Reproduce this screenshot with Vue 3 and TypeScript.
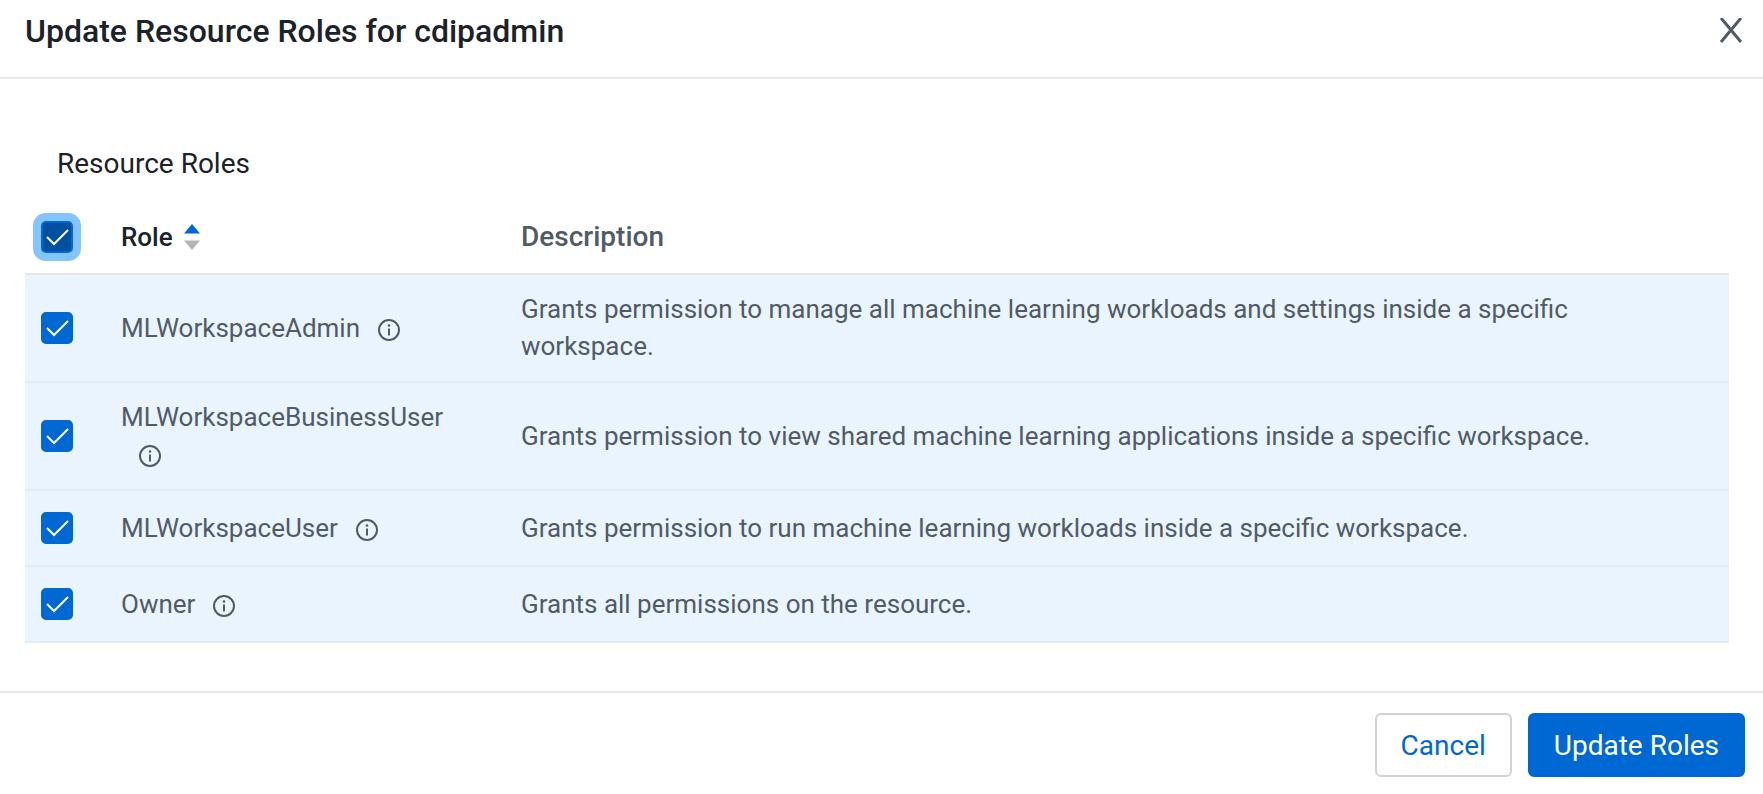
<script setup lang="ts">
import { computed, ref } from 'vue'

interface Role {
  name: string
  description: string
  selected: boolean
}

const userName = 'cdipadmin'

const roles = ref<Role[]>([
  {
    name: 'MLWorkspaceAdmin',
    description:
      'Grants permission to manage all machine learning workloads and settings inside a specific workspace.',
    selected: true,
  },
  {
    name: 'MLWorkspaceBusinessUser',
    description:
      'Grants permission to view shared machine learning applications inside a specific workspace.',
    selected: true,
  },
  {
    name: 'MLWorkspaceUser',
    description: 'Grants permission to run machine learning workloads inside a specific workspace.',
    selected: true,
  },
  {
    name: 'Owner',
    description: 'Grants all permissions on the resource.',
    selected: true,
  },
])

const ascending = ref(true)

const sortedRoles = computed(() =>
  [...roles.value].sort((a, b) => a.name.localeCompare(b.name) * (ascending.value ? 1 : -1)),
)

const allSelected = computed({
  get: () => roles.value.every((role) => role.selected),
  set: (value: boolean) => roles.value.forEach((role) => (role.selected = value)),
})
</script>

<template>
  <section class="dialog" role="dialog" aria-labelledby="dialog-title">
    <header class="dialog-header">
      <h1 id="dialog-title">Update Resource Roles for {{ userName }}</h1>
      <button class="close" type="button" aria-label="Close">
        <svg width="24" height="26" viewBox="0 0 24 26" aria-hidden="true">
          <path d="M2 0 22 24M22 0 2 24" />
        </svg>
      </button>
    </header>

    <main class="dialog-body">
      <h2>Resource Roles</h2>
      <table>
        <thead>
          <tr>
            <th class="col-check" scope="col">
              <label class="check focused">
                <input v-model="allSelected" type="checkbox" aria-label="Select all roles" />
                <svg viewBox="0 0 32 32" aria-hidden="true"><path d="M6 16 13 23 27 9" /></svg>
              </label>
            </th>
            <th class="col-role" scope="col">
              <button class="sort" type="button" @click="ascending = !ascending">
                Role
                <svg width="16" height="26" viewBox="0 0 16 26" aria-hidden="true">
                  <path :class="{ active: ascending }" d="M0 9.500 8 0 16 9.500z" />
                  <path :class="{ active: !ascending }" d="M0 16.500 8 26 16 16.500z" />
                </svg>
              </button>
            </th>
            <th class="col-description" scope="col">Description</th>
          </tr>
        </thead>
        <tbody>
          <tr v-for="role in sortedRoles" :key="role.name" :class="{ selected: role.selected }">
            <td class="col-check">
              <label class="check">
                <input v-model="role.selected" type="checkbox" :aria-label="role.name" />
                <svg viewBox="0 0 32 32" aria-hidden="true"><path d="M6 16 13 23 27 9" /></svg>
              </label>
            </td>
            <td class="col-role">
              {{ role.name }}<button class="info" type="button" :aria-label="`About ${role.name}`">
                <svg width="26" height="26" viewBox="0 0 26 26" aria-hidden="true">
                  <circle class="ring" cx="13" cy="13" r="10" />
                  <circle cx="13" cy="8.500" r="1.300" />
                  <path d="M12 11.500h2V18.500h-2z" />
                </svg>
              </button>
            </td>
            <td class="col-description">{{ role.description }}</td>
          </tr>
        </tbody>
      </table>
    </main>

    <footer class="dialog-footer">
      <button class="button" type="button">Cancel</button>
      <button class="button primary" type="button">Update Roles</button>
    </footer>
  </section>
</template>

<style>
body {
  margin: 0;
  background: #fff;
}
</style>

<style scoped>
.dialog {
  color: #1b2229;
  font-family: Roboto, 'Liberation Sans', sans-serif;
  font-size: 26px;
  line-height: 37px;
}

button {
  margin: 0;
  padding: 0;
  border: 0;
  background: none;
  color: inherit;
  font: inherit;
  cursor: pointer;
}

.dialog-header {
  display: flex;
  align-items: center;
  justify-content: space-between;
  padding: 10px 20px 25px 25px;
  border-bottom: 2px solid #e7e7e7;
}

h1 {
  margin: 0;
  font-size: 32px;
  font-weight: 500;
  line-height: 42px;
}

.close {
  display: flex;
}

.close svg {
  fill: none;
  stroke: #515b66;
  stroke-width: 3;
}

.dialog-body {
  padding: 65px 34px 48px 25px;
}

h2 {
  margin: 0 0 17px 32px;
  font-size: 28px;
  font-weight: 400;
  line-height: 40px;
}

table {
  width: 100%;
  border-collapse: separate;
  border-spacing: 0;
  table-layout: fixed;
}

th {
  padding: 16px;
  border-bottom: 2px solid #e7e7e7;
  font-size: 28px;
  font-weight: 500;
  line-height: 40px;
  text-align: left;
}

td {
  height: 42px;
  padding: 16px;
  border-bottom: 2px solid #e0ebf5;
  color: #515b66;
}

tr.selected td {
  background: #e9f4ff;
}

.col-check {
  width: 48px;
}

.col-role {
  width: 368px;
}

.col-description {
  padding-right: 48px;
  color: #515b66;
}

.check {
  position: relative;
  display: block;
  width: 32px;
  height: 32px;
}

.check input {
  display: block;
  box-sizing: border-box;
  width: 32px;
  height: 32px;
  margin: 0;
  border: 2px solid #b3b9c0;
  border-radius: 5px;
  background: #fff;
  appearance: none;
  cursor: pointer;
}

.check input:checked {
  border-color: #0068d2;
  background: #0068d2;
}

.check.focused input {
  box-shadow: 0 0 0 8px #85c5ff;
}

.check.focused input:checked {
  background: #00509f;
}

.check svg {
  position: absolute;
  inset: 0;
  fill: none;
  stroke: #fff;
  stroke-width: 2;
  pointer-events: none;
}

.check input:not(:checked) + svg {
  display: none;
}

.sort {
  display: flex;
  align-items: center;
  gap: 11px;
  font-size: 26px;
}

.sort path {
  fill: #b5b5b5;
}

.sort path.active {
  fill: #0068d2;
}

.info {
  display: inline-block;
  height: 26px;
  margin: 0 16px;
  vertical-align: middle;
}

.info svg {
  display: block;
  fill: #515b66;
}

.info .ring {
  fill: none;
  stroke: #515b66;
  stroke-width: 2;
}

.dialog-footer {
  display: flex;
  justify-content: flex-end;
  gap: 16px;
  padding: 20px 18px 16px;
  border-top: 2px solid #e7e7e7;
}

.button {
  height: 64px;
  padding: 0 24px;
  border: 2px solid #d2d2d2;
  border-radius: 6px;
  color: #0068d2;
  font-size: 28px;
}

.button.primary {
  border-color: #0068d2;
  background: #0068d2;
  color: #fff;
}
</style>
